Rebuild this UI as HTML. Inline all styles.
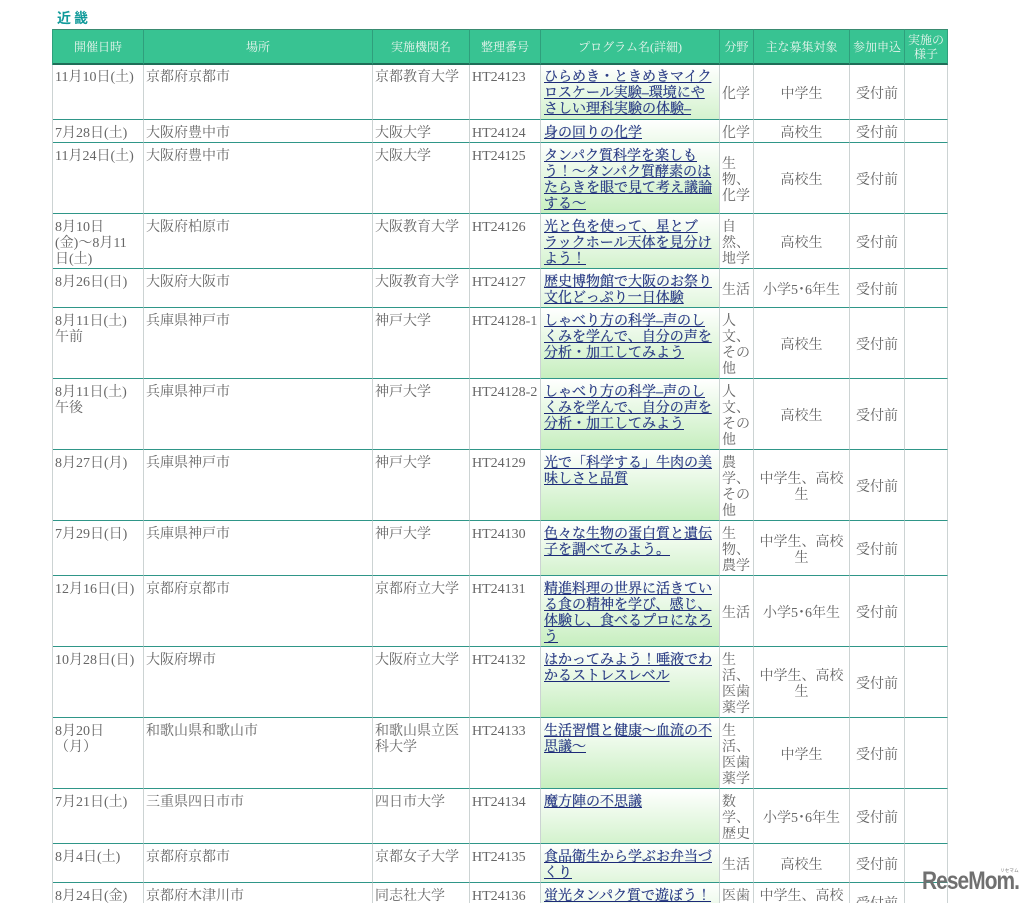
<!DOCTYPE html>
<html lang="ja"><head><meta charset="utf-8"><title>近畿</title>
<style>
html,body{margin:0;padding:0;background:#fff;width:1033px;height:903px;overflow:hidden}
body{position:relative;font-family:"Liberation Serif","Noto Serif CJK JP",serif;font-size:14px;line-height:16px;color:#666}
h2{position:absolute;left:57px;top:10px;margin:0;font:bold 14px/16px "Liberation Sans","Noto Sans CJK JP",sans-serif;color:#109a9a;letter-spacing:3px}
table{position:absolute;left:52px;top:29px;width:896px;table-layout:fixed;border-collapse:separate;border-spacing:0;border-left:1px solid #ccd3d3}
th{height:32px;padding:1px 0 0;background:#38c392;color:#e8f5ee;font-weight:normal;font-size:12px;line-height:14px;border-top:1px solid #3a8a70;border-right:1px solid #2f9f7c;border-bottom:2px solid #1f6e58;box-sizing:content-box}
th:first-child{box-shadow:-1px 0 0 #2f9f7c}
td{padding:6px 2px 0 2px;vertical-align:top;border-right:1px solid #ccd3d3;border-bottom:1px solid #2f9688;overflow:hidden;box-sizing:border-box}
tr.f td{padding-top:5px}
td.m{vertical-align:middle}
td.c{text-align:center;vertical-align:middle}
td.p{padding:6px 3px 0 3px;background:linear-gradient(to bottom,#fff 0%,#c5eebd 100%) 0 0/100% 72px repeat-x;font-weight:normal}
td.p a{color:#2a3c85;text-decoration:underline;text-decoration-color:#1c2a78;-webkit-text-stroke:.25px #2a3c85}
#logo{position:absolute;left:922px;top:868px;font:bold 25px/26px "Liberation Sans",sans-serif;color:#707070;letter-spacing:-1.1px;transform:scaleX(.835);transform-origin:left;white-space:nowrap}
#kana{position:absolute;left:1000px;top:868px;font:4.5px/6px "Liberation Sans","Noto Sans CJK JP",sans-serif;color:#777;letter-spacing:.2px}
</style></head><body>
<h2>近畿</h2>
<table>
<colgroup><col style="width:91px"><col style="width:229px"><col style="width:97px"><col style="width:71px"><col style="width:179px"><col style="width:34px"><col style="width:96px"><col style="width:55px"><col style="width:43px"></colgroup>
<tr><th>開催日時</th><th>場所</th><th>実施機関名</th><th>整理番号</th><th>プログラム名(詳細)</th><th>分野</th><th>主な募集対象</th><th>参加申込</th><th>実施の<br>様子</th></tr>
<tr class="f" style="height:55px"><td>11月10日(土)</td><td>京都府京都市</td><td>京都教育大学</td><td>HT24123</td><td class="p" style="padding-top:5px"><a>ひらめき・ときめきマイクロスケール実験–環境にやさしい理科実験の体験–</a></td><td class="m">化学</td><td class="c">中学生</td><td class="c">受付前</td><td></td></tr>
<tr style="height:23px"><td>7月28日(土)</td><td>大阪府豊中市</td><td>大阪大学</td><td>HT24124</td><td class="p"><a>身の回りの化学</a></td><td class="m">化学</td><td class="c">高校生</td><td class="c">受付前</td><td></td></tr>
<tr style="height:71px"><td>11月24日(土)</td><td>大阪府豊中市</td><td>大阪大学</td><td>HT24125</td><td class="p"><a>タンパク質科学を楽しもう！～タンパク質酵素のはたらきを眼で見て考え議論する～</a></td><td class="m">生物、化学</td><td class="c">高校生</td><td class="c">受付前</td><td></td></tr>
<tr style="height:55px"><td>8月10日<br>(金)～8月11<br>日(土)</td><td>大阪府柏原市</td><td>大阪教育大学</td><td>HT24126</td><td class="p"><a>光と色を使って、星とブ<br>ラックホール天体を見分け<br>よう！</a></td><td class="m">自然、地学</td><td class="c">高校生</td><td class="c">受付前</td><td></td></tr>
<tr style="height:39px"><td>8月26日(日)</td><td>大阪府大阪市</td><td>大阪教育大学</td><td>HT24127</td><td class="p"><a>歴史博物館で大阪のお祭り文化どっぷり一日体験</a></td><td class="m">生活</td><td class="c">小学5･6年生</td><td class="c">受付前</td><td></td></tr>
<tr style="height:71px"><td>8月11日(土)<br>午前</td><td>兵庫県神戸市</td><td>神戸大学</td><td>HT24128-1</td><td class="p"><a>しゃべり方の科学–声のしくみを学んで、自分の声を分析・加工してみよう</a></td><td class="m">人文、その他</td><td class="c">高校生</td><td class="c">受付前</td><td></td></tr>
<tr style="height:71px"><td>8月11日(土)<br>午後</td><td>兵庫県神戸市</td><td>神戸大学</td><td>HT24128-2</td><td class="p"><a>しゃべり方の科学–声のしくみを学んで、自分の声を分析・加工してみよう</a></td><td class="m">人文、その他</td><td class="c">高校生</td><td class="c">受付前</td><td></td></tr>
<tr style="height:71px"><td>8月27日(月)</td><td>兵庫県神戸市</td><td>神戸大学</td><td>HT24129</td><td class="p"><a>光で「科学する」牛肉の美味しさと品質</a></td><td class="m">農学、その他</td><td class="c">中学生、高校生</td><td class="c">受付前</td><td></td></tr>
<tr style="height:55px"><td>7月29日(日)</td><td>兵庫県神戸市</td><td>神戸大学</td><td>HT24130</td><td class="p"><a>色々な生物の蛋白質と遺伝子を調べてみよう。</a></td><td class="m">生物、農学</td><td class="c">中学生、高校生</td><td class="c">受付前</td><td></td></tr>
<tr style="height:71px"><td>12月16日(日)</td><td>京都府京都市</td><td>京都府立大学</td><td>HT24131</td><td class="p"><a>精進料理の世界に活きている食の精神を学び、感じ、体験し、食べるプロになろう</a></td><td class="m">生活</td><td class="c">小学5･6年生</td><td class="c">受付前</td><td></td></tr>
<tr style="height:71px"><td>10月28日(日)</td><td>大阪府堺市</td><td>大阪府立大学</td><td>HT24132</td><td class="p"><a>はかってみよう！唾液でわかるストレスレベル</a></td><td class="m">生活、医歯薬学</td><td class="c">中学生、高校生</td><td class="c">受付前</td><td></td></tr>
<tr style="height:71px"><td>8月20日<br>（月）</td><td>和歌山県和歌山市</td><td>和歌山県立医科大学</td><td>HT24133</td><td class="p"><a>生活習慣と健康～血流の不思議～</a></td><td class="m">生活、医歯薬学</td><td class="c">中学生</td><td class="c">受付前</td><td></td></tr>
<tr style="height:55px"><td>7月21日(土)</td><td>三重県四日市市</td><td>四日市大学</td><td>HT24134</td><td class="p"><a>魔方陣の不思議</a></td><td class="m">数学、歴史</td><td class="c">小学5･6年生</td><td class="c">受付前</td><td></td></tr>
<tr style="height:39px"><td>8月4日(土)</td><td>京都府京都市</td><td>京都女子大学</td><td>HT24135</td><td class="p"><a>食品衛生から学ぶお弁当づくり</a></td><td class="m">生活</td><td class="c">高校生</td><td class="c">受付前</td><td></td></tr>
<tr style="height:39px"><td>8月24日(金)</td><td>京都府木津川市</td><td>同志社大学</td><td>HT24136</td><td class="p"><a>蛍光タンパク質で遊ぼう！</a></td><td class="m">医歯薬学</td><td class="c">中学生、高校生</td><td class="c">受付前</td><td></td></tr>
</table>
<div id="logo">ReseMom.</div><div id="kana">リセマム</div>
</body></html>
